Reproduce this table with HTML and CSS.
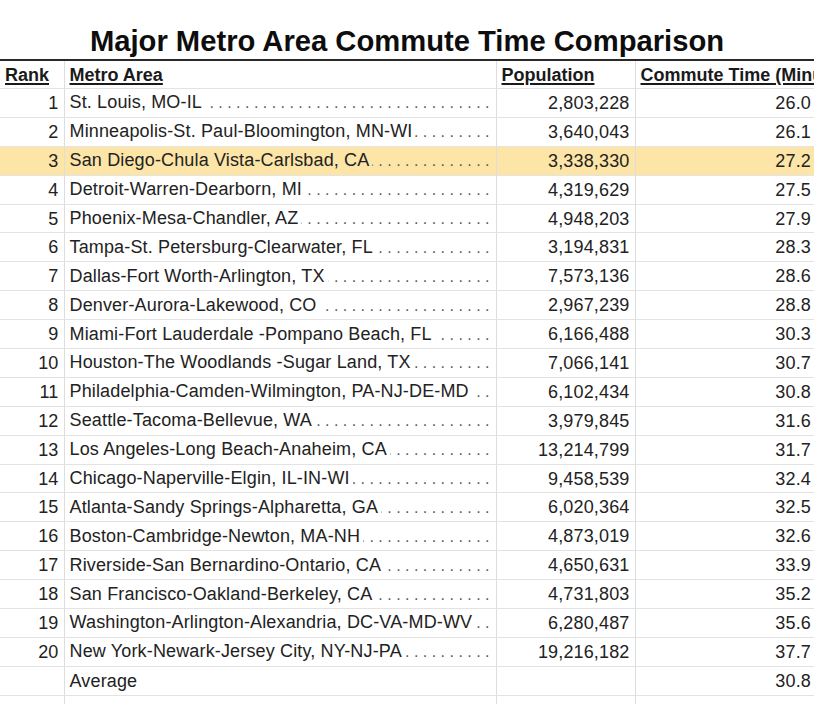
FILE: index.html
```html
<!DOCTYPE html>
<html>
<head>
<meta charset="utf-8">
<link rel="stylesheet" href="styles.css">
</head>
<body>
<div class="page">
  <h1 class="title">Major Metro Area Commute Time Comparison</h1>
  <table class="sheet">
    <colgroup>
      <col class="c-rank"><col class="c-metro"><col class="c-pop"><col class="c-time">
    </colgroup>
    <thead>
      <tr class="head">
        <th class="rank">Rank</th>
        <th>Metro Area</th>
        <th>Population</th>
        <th>Commute Time (Minutes)</th>
      </tr>
    </thead>
    <tbody id="rows">
      <tr><td class="num">1</td><td><div class="metro"><span class="name">St. Louis, MO-IL</span><span class="dots"></span></div></td><td class="num">2,803,228</td><td class="num time">26.0</td></tr>
      <tr><td class="num">2</td><td><div class="metro"><span class="name">Minneapolis-St. Paul-Bloomington, MN-WI</span><span class="dots"></span></div></td><td class="num">3,640,043</td><td class="num time">26.1</td></tr>
      <tr class="hl"><td class="num">3</td><td><div class="metro"><span class="name">San Diego-Chula Vista-Carlsbad, CA</span><span class="dots"></span></div></td><td class="num">3,338,330</td><td class="num time">27.2</td></tr>
      <tr><td class="num">4</td><td><div class="metro"><span class="name">Detroit-Warren-Dearborn, MI</span><span class="dots"></span></div></td><td class="num">4,319,629</td><td class="num time">27.5</td></tr>
      <tr><td class="num">5</td><td><div class="metro"><span class="name">Phoenix-Mesa-Chandler, AZ</span><span class="dots"></span></div></td><td class="num">4,948,203</td><td class="num time">27.9</td></tr>
      <tr><td class="num">6</td><td><div class="metro"><span class="name">Tampa-St. Petersburg-Clearwater, FL</span><span class="dots"></span></div></td><td class="num">3,194,831</td><td class="num time">28.3</td></tr>
      <tr><td class="num">7</td><td><div class="metro"><span class="name">Dallas-Fort Worth-Arlington, TX</span><span class="dots"></span></div></td><td class="num">7,573,136</td><td class="num time">28.6</td></tr>
      <tr><td class="num">8</td><td><div class="metro"><span class="name">Denver-Aurora-Lakewood, CO</span><span class="dots"></span></div></td><td class="num">2,967,239</td><td class="num time">28.8</td></tr>
      <tr><td class="num">9</td><td><div class="metro"><span class="name">Miami-Fort Lauderdale -Pompano Beach, FL</span><span class="dots"></span></div></td><td class="num">6,166,488</td><td class="num time">30.3</td></tr>
      <tr><td class="num">10</td><td><div class="metro"><span class="name">Houston-The Woodlands -Sugar Land, TX</span><span class="dots"></span></div></td><td class="num">7,066,141</td><td class="num time">30.7</td></tr>
      <tr><td class="num">11</td><td><div class="metro"><span class="name">Philadelphia-Camden-Wilmington, PA-NJ-DE-MD</span><span class="dots"></span></div></td><td class="num">6,102,434</td><td class="num time">30.8</td></tr>
      <tr><td class="num">12</td><td><div class="metro"><span class="name">Seattle-Tacoma-Bellevue, WA</span><span class="dots"></span></div></td><td class="num">3,979,845</td><td class="num time">31.6</td></tr>
      <tr><td class="num">13</td><td><div class="metro"><span class="name">Los Angeles-Long Beach-Anaheim, CA</span><span class="dots"></span></div></td><td class="num">13,214,799</td><td class="num time">31.7</td></tr>
      <tr><td class="num">14</td><td><div class="metro"><span class="name">Chicago-Naperville-Elgin, IL-IN-WI</span><span class="dots"></span></div></td><td class="num">9,458,539</td><td class="num time">32.4</td></tr>
      <tr><td class="num">15</td><td><div class="metro"><span class="name">Atlanta-Sandy Springs-Alpharetta, GA</span><span class="dots"></span></div></td><td class="num">6,020,364</td><td class="num time">32.5</td></tr>
      <tr><td class="num">16</td><td><div class="metro"><span class="name">Boston-Cambridge-Newton, MA-NH</span><span class="dots"></span></div></td><td class="num">4,873,019</td><td class="num time">32.6</td></tr>
      <tr><td class="num">17</td><td><div class="metro"><span class="name">Riverside-San Bernardino-Ontario, CA</span><span class="dots"></span></div></td><td class="num">4,650,631</td><td class="num time">33.9</td></tr>
      <tr><td class="num">18</td><td><div class="metro"><span class="name">San Francisco-Oakland-Berkeley, CA</span><span class="dots"></span></div></td><td class="num">4,731,803</td><td class="num time">35.2</td></tr>
      <tr><td class="num">19</td><td><div class="metro"><span class="name">Washington-Arlington-Alexandria, DC-VA-MD-WV</span><span class="dots"></span></div></td><td class="num">6,280,487</td><td class="num time">35.6</td></tr>
      <tr><td class="num">20</td><td><div class="metro"><span class="name">New York-Newark-Jersey City, NY-NJ-PA</span><span class="dots"></span></div></td><td class="num">19,216,182</td><td class="num time">37.7</td></tr>
      <tr><td class="num"></td><td>Average</td><td class="num"></td><td class="num time">30.8</td></tr>
      <tr><td></td><td></td><td></td><td></td></tr>
    </tbody>
  </table>
</div>
<script src="app.js"></script>
</body>
</html>
```

FILE: app.js
```js
document.querySelectorAll('.dots').forEach(function (el) {
  el.textContent = ' .'.repeat(80);
});
```

FILE: styles.css
```css
html, body {
  margin: 0;
  padding: 0;
  background: #ffffff;
  overflow: hidden;
}

.page {
  width: 814px;
  height: 704px;
  overflow: hidden;
  font-family: "Liberation Sans", Arial, sans-serif;
  color: #222222;
}

.title {
  margin: 0;
  padding-top: 24px;
  height: 35px;
  line-height: 34px;
  font-size: 29.2px;
  font-weight: bold;
  text-align: center;
  color: #0d0d0d;
  white-space: nowrap;
}

.sheet {
  border-collapse: collapse;
  table-layout: fixed;
  width: 814px;
  border-top: 2px solid #2a2a2a;
  font-size: 18px;
}

.c-rank { width: 64px; }
.c-metro { width: 432px; }
.c-pop { width: 139px; }
.c-time { width: 179px; }

.sheet th,
.sheet td {
  border-bottom: 1px solid #e3e3e3;
  border-left: 1px solid #dddddd;
  padding: 0 5px;
  white-space: nowrap;
  overflow: hidden;
  text-align: left;
}

.sheet th:first-child,
.sheet td:first-child {
  border-left: none;
}

.sheet th {
  height: 25px;
  padding-top: 2px;
  font-weight: bold;
  text-decoration: underline;
  text-decoration-thickness: 2px;
  text-underline-offset: 2px;
  overflow: visible;
  color: #1a1a1a;
}

.sheet td {
  height: 27.9px;
  line-height: 20px;
  letter-spacing: 0.15px;
}

.sheet td.num {
  text-align: right;
}

.sheet td.time {
  padding-right: 3px;
}

.hl td {
  background: #fce5a6;
}

.metro {
  display: flex;
  align-items: baseline;
  gap: 3px;
}

.name {
  flex: none;
}

.dots {
  flex: 1;
  min-width: 0;
  overflow: hidden;
  white-space: nowrap;
  direction: rtl;
  color: #5a5a5a;
  font-size: 16px;
  letter-spacing: 0;
  padding-right: 1px;
}
```
